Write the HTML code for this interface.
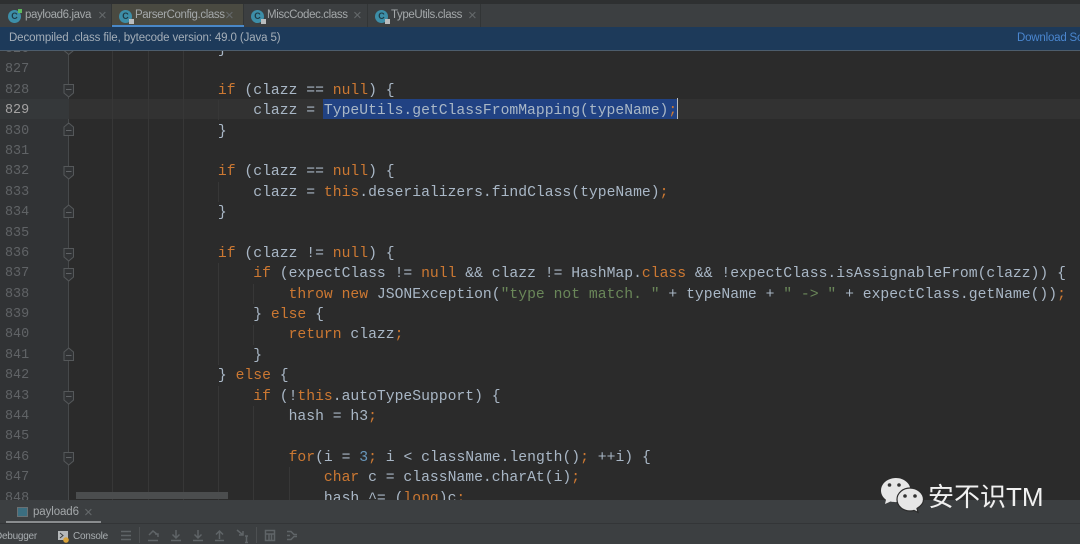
<!DOCTYPE html>
<html><head><meta charset="utf-8">
<style>
html,body{margin:0;padding:0;background:#2b2b2b}
#r{position:relative;width:1080px;height:544px;overflow:hidden;background:#2b2b2b;font-family:"Liberation Sans",sans-serif}
.a{position:absolute}
.tab{position:absolute;top:4px;height:24px;border-right:1px solid #323536;box-sizing:border-box;filter:blur(.3px)}
.tab span.t{position:absolute;top:5px;font-size:11.5px;letter-spacing:-.38px;color:#a4a8aa;white-space:nowrap}
.tab span.x{position:absolute;top:4px;font-size:15px;line-height:15px;color:#65696b}
.ic{position:absolute;top:6px;width:13px;height:13px;border-radius:50%;background:#3d8ea8;color:#1f3a45;font:bold 9px/13px "Liberation Sans",sans-serif;text-align:center}
.ic i{position:absolute;right:-2px;bottom:-1px;width:5px;height:5px;background:#b9bcbe}
#code,#nums{position:absolute;margin:0;font-family:"Liberation Mono",monospace;line-height:20.39px;white-space:pre;filter:blur(.35px)}
#code{left:76.6px;top:40px;color:#a9b7c6;font-size:14.72px}
#nums{left:5px;top:40px;color:#606366;font-size:13.4px}
#nums b{font-weight:normal;color:#a4a3a3}
.k{color:#cc7832}.s{color:#6a8759}.w{color:#a9b7c6}
.g{position:absolute;width:1px;background:#373737}
.tb{position:absolute;left:0;top:0}
</style></head><body>
<div id="r">
<!-- editor -->
<div class="a" style="left:0;top:51px;width:69px;height:449px;background:#313335"></div>
<div class="a" style="left:68px;top:51px;width:1px;height:449px;background:#46494b"></div>
<div class="a" style="left:0;top:99px;width:69px;height:20px;background:#35383a"></div>
<div class="a" style="left:69px;top:99px;width:1011px;height:20px;background:#323232"></div>
<div class="a" style="left:323px;top:99px;width:354px;height:20px;background:#214283"></div>
<div class="a" style="left:677px;top:98px;width:1px;height:21px;background:#b9bcbe"></div>

<div class="g" style="left:112px;top:51px;height:449px"></div>
<div class="g" style="left:148px;top:51px;height:449px"></div>
<div class="g" style="left:183px;top:51px;height:449px"></div>
<div class="g" style="left:218px;top:100px;height:20px"></div>
<div class="g" style="left:218px;top:182px;height:20px"></div>
<div class="g" style="left:218px;top:263px;height:102px"></div>
<div class="g" style="left:218px;top:386px;height:114px"></div>
<div class="g" style="left:253px;top:284px;height:20px"></div>
<div class="g" style="left:253px;top:325px;height:20px"></div>
<div class="g" style="left:253px;top:406px;height:94px"></div>
<div class="g" style="left:289px;top:467px;height:33px"></div>

<svg class="a" style="left:0;top:0" width="80" height="500" fill="#313335" stroke="#55585a" stroke-width="1">
<path d="M64 41.500h9.500v9l-4.750 4-4.750-4z M64 84.500h9.500v8.500l-4.750 4-4.750-4z M64 166.500h9.500v8.500l-4.750 4-4.750-4z M64 248.500h9.500v8.500l-4.750 4-4.750-4z M64 268.500h9.500v8.500l-4.750 4-4.750-4z M64 391.500h9.500v8.500l-4.750 4-4.750-4z M64 452.500h9.500v8.500l-4.750 4-4.750-4z"/>
<path d="M64 135.500h9.500v-8.500l-4.750-4-4.750 4z M64 217.500h9.500v-8.500l-4.750-4-4.750 4z M64 360.500h9.500v-8.500l-4.750-4-4.750 4z"/>
<path d="M66 89.500h5.500M66 130.500h5.500M66 171.500h5.500M66 212.500h5.500M66 253.500h5.500M66 273.500h5.500M66 355.500h5.500M66 396.500h5.500M66 457.500h5.500" stroke="#606366"/>
</svg>

<pre id="nums">826
827
828
<b>829</b>
830
831
832
833
834
835
836
837
838
839
840
841
842
843
844
845
846
847
848</pre>
<pre id="code">                <span class="w">}</span>

                <span class="k">if</span> (clazz == <span class="k">null</span>) {
                    clazz = TypeUtils.getClassFromMapping(typeName)<span class="k">;</span>
                }

                <span class="k">if</span> (clazz == <span class="k">null</span>) {
                    clazz = <span class="k">this</span>.deserializers.findClass(typeName)<span class="k">;</span>
                }

                <span class="k">if</span> (clazz != <span class="k">null</span>) {
                    <span class="k">if</span> (expectClass != <span class="k">null</span> &amp;&amp; clazz != HashMap.<span class="k">class</span> &amp;&amp; !expectClass.isAssignableFrom(clazz)) {
                        <span class="k">throw new</span> JSONException(<span class="s">"type not match. "</span> + typeName + <span class="s">" -&gt; "</span> + expectClass.getName())<span class="k">;</span>
                    } <span class="k">else</span> {
                        <span class="k">return</span> clazz<span class="k">;</span>
                    }
                } <span class="k">else</span> {
                    <span class="k">if</span> (!<span class="k">this</span>.autoTypeSupport) {
                        hash = h3<span class="k">;</span>

                        <span class="k">for</span>(i = <span class="s" style="color:#6897bb">3</span><span class="k">;</span> i &lt; className.length()<span class="k">;</span> ++i) {
                            <span class="k">char</span> c = className.charAt(i)<span class="k">;</span>
                            hash ^= (<span class="k">long</span>)c<span class="k">;</span></pre>
<div class="a" style="left:76px;top:492px;width:152px;height:7px;background:#4b4d4e"></div>

<!-- top -->
<div class="a" style="left:0;top:0;width:1080px;height:28px;background:#3c3f41"></div>
<div class="a" style="left:0;top:0;width:1080px;height:4px;background:#2e3031"></div>
<div class="tab" style="left:0;width:112px"><div class="ic" style="left:8px">C<i style="background:#5fb85f;top:-1px;right:-1px;width:4px;height:4px"></i></div><span class="t" style="left:25px">payload6.java</span><span class="x" style="left:98px">×</span></div>
<div class="tab" style="left:112px;width:132px;background:#4a4a41"><div class="ic" style="left:7px">C<i></i></div><span class="t" style="left:23px">ParserConfig.class</span><span class="x" style="left:113px">×</span></div>
<div class="a" style="left:112px;top:25px;width:132px;height:2.500px;background:#4a88c7"></div>
<div class="tab" style="left:244px;width:124px"><div class="ic" style="left:7px">C<i></i></div><span class="t" style="left:23px">MiscCodec.class</span><span class="x" style="left:109px">×</span></div>
<div class="tab" style="left:368px;width:113px"><div class="ic" style="left:7px">C<i></i></div><span class="t" style="left:23px">TypeUtils.class</span><span class="x" style="left:100px">×</span></div>

<div class="a" style="left:0;top:27px;width:1080px;height:24px;background:#1d3a5a;border-bottom:1px solid #4d5d6c;box-sizing:border-box"></div>
<div class="a" style="left:9px;top:32px;font-size:11.5px;letter-spacing:-.12px;color:#a4aeb8;white-space:nowrap;filter:blur(.3px)">Decompiled .class file, bytecode version: 49.0 (Java 5)</div>
<div class="a" style="left:1017px;top:32px;font-size:11.5px;letter-spacing:-.2px;color:#4a86cf;white-space:nowrap;filter:blur(.3px)">Download Sources</div>

<!-- bottom -->
<div class="a" style="left:0;top:500px;width:1080px;height:44px;background:#3c3f41"></div>
<div class="a" style="left:0;top:523px;width:1080px;height:1px;background:#333537"></div>
<div class="a" style="left:6px;top:521px;width:95px;height:2px;background:#8a8d8f"></div>
<div class="a" style="left:17px;top:507px;width:11px;height:10px;background:#3b6e80;border:1px solid #6a7073;box-sizing:border-box"></div>
<div class="a" style="left:33px;top:506px;font-size:11.5px;letter-spacing:-.1px;color:#a4a8aa">payload6</div>
<div class="a" style="left:84px;top:504px;font-size:15px;color:#65696b">×</div>
<div class="a" style="left:-5px;top:531px;font-size:10px;letter-spacing:-.25px;color:#a8adb0">Debugger</div>
<svg class="a" style="left:57px;top:530px" width="14" height="14"><path d="M1 1h10v9H1z" fill="#b5b8ba"/><path d="M3 3l3 2.500-3 2.500" fill="none" stroke="#3c3f41"/><circle cx="9" cy="10" r="2.800" fill="#d9a33a"/></svg>
<div class="a" style="left:73px;top:531px;font-size:10px;letter-spacing:-.25px;color:#a8adb0">Console</div>
<svg class="a" style="left:110px;top:522px;filter:blur(.3px)" width="200" height="22" fill="none" stroke="#5f6467" stroke-width="1.500">
<path d="M11 9.500h10M11 13.500h10M11 17.500h10"/>
<path d="M29.500 5v16M146.500 5v16" stroke="#4d5052" stroke-width="1"/>
<path d="M38 18.500h10M39 13l4-4 5 4 M48 15v-3h-3"/>
<path d="M61 18.500h10M66 8v8M62.500 12.500L66 16l3.500-3.500"/>
<path d="M83 18.500h10M88 8v8M84.500 12.500L88 16l3.500-3.500"/>
<path d="M105 18.500h9M109.500 17V9M106 12.500L109.500 9l3.500 3.500"/>
<path d="M127 8l6 5M133 9v4h-4M135 14h3M136.500 14v6M135 20.500h3"/>
<path d="M155.500 8.500h9v10h-9zM155.500 12h9M159 12v6.500M161.500 12v6.500"/>
<path d="M177 9.500h4l3 3h3M177 17.500h4l3-3h3M177 13.500h3"/>
</svg>

<!-- watermark -->
<svg class="a" style="left:878px;top:474px" width="48" height="42" viewBox="0 0 48 42">
<path d="M18 4C9.700 4 3 9.600 3 16.500c0 3.800 2 7 5 9.200L7 30l5.500-2.500c1.500.4 3 .6 5 .6 8 0 15-5.400 15-12C32.500 9.600 26 4 18 4z" fill="#e6e6e6"/>
<path d="M32 14c-7 0-13 5-13 11.500S25 37 32 37c1.500 0 3-.2 4-.6l4 2-1-4C43 32 45.500 29 45.500 25.500 45.500 19 39 14 32 14z" fill="#e6e6e6" stroke="#2b2b2b" stroke-width="1.200"/>
<circle cx="11.500" cy="11" r="1.800" fill="#333"/><circle cx="21" cy="11" r="1.800" fill="#333"/>
<circle cx="27" cy="22" r="1.800" fill="#333"/><circle cx="37" cy="22" r="1.800" fill="#333"/>
</svg>
<div class="a" style="left:928px;top:481px;font-family:'Liberation Sans','Noto Sans CJK SC',sans-serif;font-size:26px;line-height:32px;color:#f0f0f0;white-space:nowrap">安不识TM</div>
</div>
</body></html>
